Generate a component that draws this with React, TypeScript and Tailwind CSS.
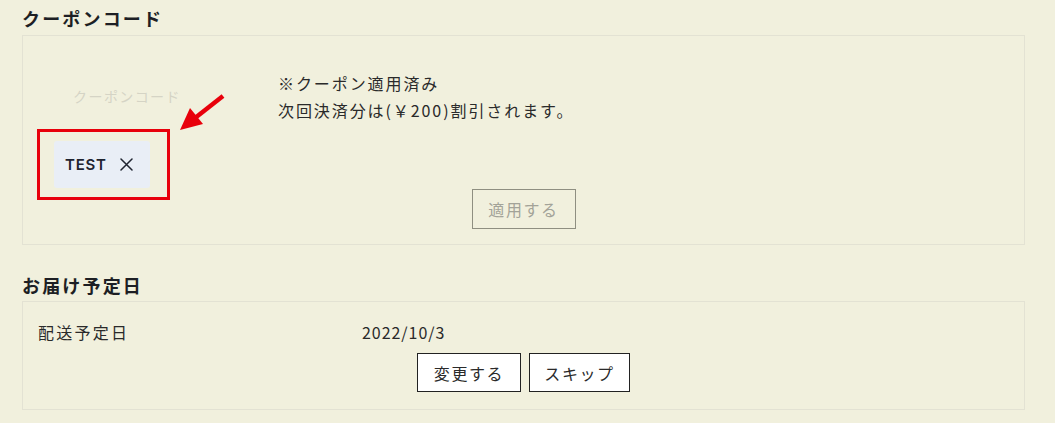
import React from 'react'

const font = { fontFamily: '"Noto Sans CJK JP", "Noto Sans", sans-serif' }

const CouponChip = ({ code }: { code: string }) => {
  return (
    <div className="relative mt-[30px] ml-[16px] w-fit">
      <div className="flex items-center gap-[13px] rounded-[3px] bg-[#e9eef6] pl-[11px] pr-[17px] py-[12px]">
        <span className="text-[15px] leading-[23px] font-semibold tracking-[0.05em] text-[#1f2430]" style={{ fontFamily: 'Inter, "Noto Sans", sans-serif' }}>
          {code}
        </span>
        <svg width="13" height="13" viewBox="0 0 13 13" className="text-[#1f2430]">
          <path d="M1 1 L12 12 M12 1 L1 12" stroke="currentColor" strokeWidth="1.5" strokeLinecap="round" />
        </svg>
      </div>
      {/* annotation */}
      <div className="absolute -left-[17px] -right-[20px] -top-[12px] -bottom-[12px] border-[3px] border-[#e8000b]" />
      <svg className="absolute left-[121px] -top-[51px]" width="55" height="45" viewBox="0 0 55 45">
        <line x1="48" y1="6" x2="20" y2="28" stroke="#e8000b" strokeWidth="4.5" />
        <polygon points="5,40 28,34 15,18" fill="#e8000b" />
      </svg>
    </div>
  )
}

export default function App() {
  return (
    <div className="min-h-screen bg-[#f1f0dd] px-[22px] pt-[6px] text-[#2a2a2a]" style={font}>
      <h2 className="text-[18px] leading-[24px] font-bold tracking-[0.12em] text-[#1d1f24]">クーポンコード</h2>
      <section className="mt-[5px] w-[1003px] border border-[#e3e2d3] pl-[15px] pr-[15px] pt-[34px] pb-[15px] flex flex-col">
        <div className="flex items-start">
          <div className="w-[240px] mt-[11px] flex flex-col">
            <input
              className="w-[178px] h-[30px] bg-transparent text-center text-[14px] tracking-[0.1em] outline-none placeholder:text-[#d5d4c5]"
              placeholder="クーポンコード"
              style={font}
            />
            <CouponChip code="TEST" />
          </div>
          <div className="text-[16px] leading-[27px] tracking-[0.12em]">
            <p>※クーポン適用済み</p>
            <p>次回決済分は(￥200)割引されます。</p>
          </div>
        </div>
        <button className="self-center mt-[1px] h-[40px] w-[104px] border border-[#8f8f81] text-[16px] tracking-[0.1em] text-[#a3a398]" style={font}>
          適用する
        </button>
      </section>

      <h2 className="mt-[28px] text-[18px] leading-[24px] font-bold tracking-[0.12em] text-[#1d1f24]">お届け予定日</h2>
      <section className="mt-[4px] w-[1003px] border border-[#e3e2d3] pl-[15px] pr-[15px] pt-[18px] pb-[17px] flex flex-col">
        <div className="flex text-[16px] leading-[24px]">
          <span className="w-[324px] tracking-[0.14em]">配送予定日</span>
          <span className="tracking-[0.06em]">2022/10/3</span>
        </div>
        <div className="mt-[9px] flex justify-center gap-[8px]">
          <button className="h-[39px] w-[104px] border border-[#222] bg-white text-[16px] tracking-[0.1em] text-[#2a2a2a]" style={font}>
            変更する
          </button>
          <button className="h-[39px] w-[101px] border border-[#222] bg-white text-[16px] tracking-[0.1em] text-[#2a2a2a]" style={font}>
            スキップ
          </button>
        </div>
      </section>
    </div>
  )
}
